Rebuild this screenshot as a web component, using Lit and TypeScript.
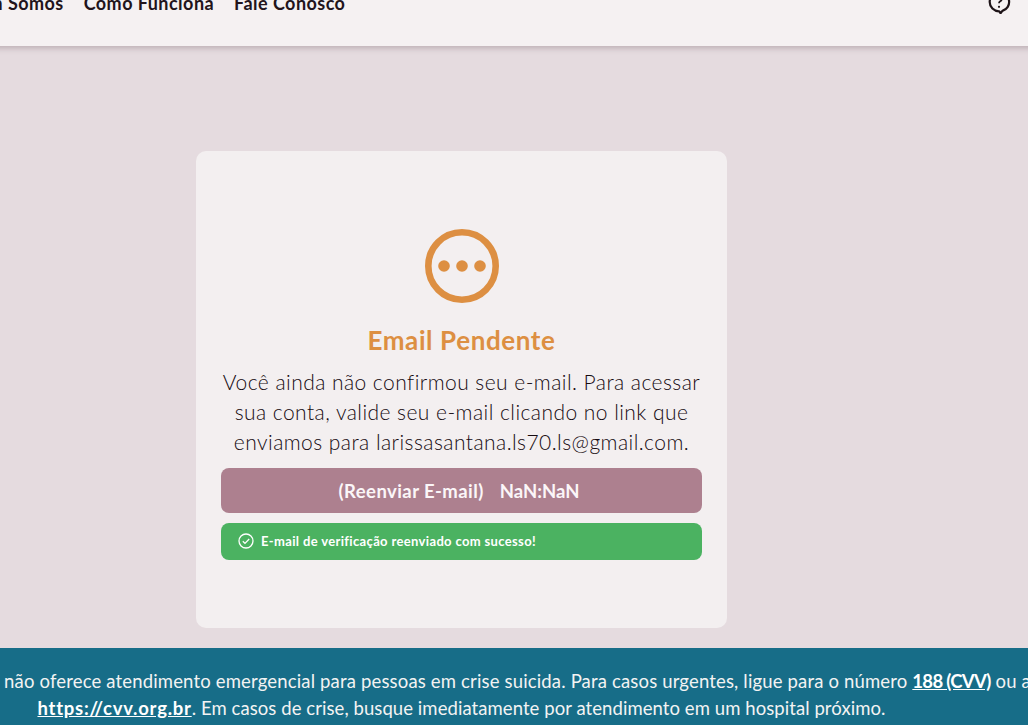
import { LitElement, html, css } from "lit";
import { customElement } from "lit/decorators.js";

@customElement("app-root")
export class AppRoot extends LitElement {
  static styles = css`
    :host {
      display: block;
      width: 100%;
      height: 725px;
      overflow: hidden;
      background: #e5dbdf;
      font-family: Lato, "Noto Sans", sans-serif;
      color: #2b1a22;
    }
    .page {
      width: 1400px;
      margin-left: -238.5px;
      margin-top: -30px;
      height: 755px;
      display: flex;
      flex-direction: column;
    }
    .nav {
      height: 76px;
      flex: none;
      background: #f5f1f2;
      box-shadow: 0 2px 6px rgba(60, 30, 45, 0.25);
      display: flex;
      align-items: center;
      padding-left: 190.5px;
      padding-right: 151px;
      padding-bottom: 10px;
      box-sizing: border-box;
      position: relative;
    }
    .links {
      display: flex;
      gap: 20px;
      font-size: 18px;
      font-weight: 700;
      letter-spacing: 0.45px;
      color: #22141b;
      white-space: nowrap;
    }
    .nav svg {
      margin-left: auto;
      display: block;
      margin-bottom: 2px;
    }
    .main {
      flex: 1;
      display: flex;
      justify-content: center;
      align-items: flex-start;
      padding-top: 105px;
    }
    .card {
      width: 531px;
      height: 477px;
      box-sizing: border-box;
      padding: 78px 25px 0;
      background: #f3eff0;
      border-radius: 10px;
      display: flex;
      flex-direction: column;
      align-items: stretch;
      text-align: center;
    }
    .icon {
      display: block;
      margin: 0 auto;
    }
    h1 {
      margin: 20px 0 0;
      font-size: 26px;
      line-height: 34px;
      font-weight: 700;
      letter-spacing: 0.6px;
      color: #dd8f42;
    }
    p {
      margin: 10px 0 0;
      font-size: 21px;
      line-height: 30px;
      font-weight: 300;
      letter-spacing: 0.45px;
      color: #160a10;
    }
    .btn {
      margin-top: 11px;
      height: 45px;
      border-radius: 8px;
      background: #ad808f;
      color: #fbf6f8;
      font-size: 18.5px;
      font-weight: 700;
      display: flex;
      align-items: center;
      justify-content: center;
      gap: 16px;
      padding-right: 5px;
    }
    .btn .label {
      letter-spacing: 0.42px;
    }
    .alert {
      margin-top: 10px;
      height: 37px;
      border-radius: 8px;
      background: #4bb261;
      color: #fff;
      font-size: 13px;
      font-weight: 700;
      letter-spacing: 0.35px;
      display: flex;
      align-items: center;
      gap: 7px;
      padding-left: 17px;
      padding-bottom: 1px;
      box-sizing: border-box;
    }
    .foot {
      height: 77px;
      flex: none;
      background: #176d88;
      color: #f3f3f3;
      font-size: 18.5px;
      line-height: 27px;
      text-align: center;
      padding-top: 20px;
      box-sizing: border-box;
      white-space: nowrap;
    }
    .foot .one {
      letter-spacing: 0.16px;
      padding-left: 8px;
    }
    .foot .two {
      letter-spacing: 0.07px;
    }
    .foot a {
      color: #fff;
      font-weight: 700;
      text-decoration: underline;
    }
    .foot a.site {
      letter-spacing: 0.75px;
    }
    .foot a.num {
      letter-spacing: -0.7px;
    }
  `;

  render() {
    return html`
      <div class="page">
        <div class="nav">
          <div class="links">
            <span>Quem Somos</span><span>Como Funciona</span><span>Fale Conosco</span>
          </div>
          <svg width="24" height="24" viewBox="0 0 24 24" fill="none" stroke="#1d1317" stroke-width="2.2">
            <path d="M12 2.7a9.3 9.3 0 1 0 0 18.6h.3l1.2 2 1.9-2.4a9.3 9.3 0 0 0-3.4-18.2z" stroke-linejoin="round" />
            <path d="M9.4 9a2.6 2.6 0 1 1 3.8 2.3c-.8.5-1.2 1-1.2 2" stroke-width="1.8" />
            <circle cx="12" cy="16.8" r="1.1" fill="#1d1317" stroke="none" />
          </svg>
        </div>
        <div class="main">
          <div class="card">
            <svg class="icon" width="74" height="74" viewBox="0 0 74 74">
              <circle cx="37" cy="37" r="33.7" fill="none" stroke="#dd8f42" stroke-width="6.6" />
              <circle cx="19" cy="37" r="5.8" fill="#dd8f42" />
              <circle cx="37" cy="37" r="5.8" fill="#dd8f42" />
              <circle cx="55" cy="37" r="5.8" fill="#dd8f42" />
            </svg>
            <h1>Email Pendente</h1>
            <p>Você ainda não confirmou seu e-mail. Para acessar<br />sua conta, valide seu e-mail clicando no link que<br />enviamos para larissasantana.ls70.ls@gmail.com.</p>
            <div class="btn"><span class="label">(Reenviar E-mail)</span><span>NaN:NaN</span></div>
            <div class="alert">
              <svg width="16" height="16" viewBox="0 0 16 16" fill="none" stroke="#fff" stroke-width="1.3">
                <circle cx="8" cy="8" r="7" />
                <path d="M4.8 8.2l2.2 2.2 4.2-4.4" />
              </svg>
              <span>E-mail de verificação reenviado com sucesso!</span>
            </div>
          </div>
        </div>
        <div class="foot">
          <div class="one">Nossa plataforma não oferece atendimento emergencial para pessoas em crise suicida. Para casos urgentes, ligue para o número <a class="num">188 (CVV)</a> ou acesse</div>
          <div class="two"><a class="site">https://cvv.org.br</a>. Em casos de crise, busque imediatamente por atendimento em um hospital próximo.</div>
        </div>
      </div>
    `;
  }
}
